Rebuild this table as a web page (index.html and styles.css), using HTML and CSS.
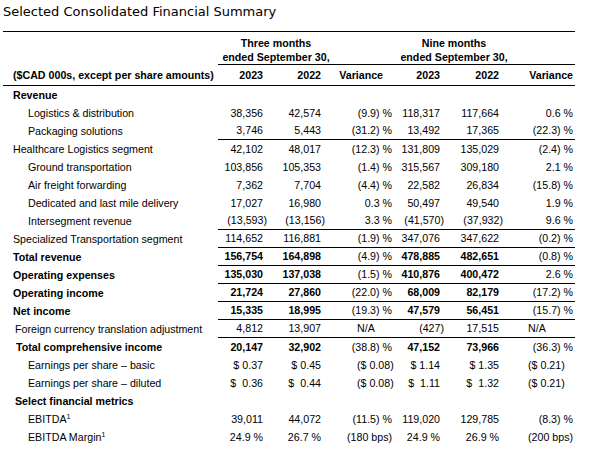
FILE: index.html
```html
<!DOCTYPE html>
<html lang="en">
<head>
<meta charset="utf-8">
<title>Selected Consolidated Financial Summary</title>
<link rel="stylesheet" href="styles.css">
</head>
<body>
<div class="page">
  <h1 class="title">Selected Consolidated Financial Summary</h1>
  <table class="fin">
    <colgroup>
      <col class="c-lbl"><col class="c-a"><col class="c-b"><col class="c-c"><col class="c-d"><col class="c-e"><col class="c-f">
    </colgroup>
    <thead>
      <tr class="h1">
        <td></td>
        <td colspan="3" class="grp">Three months</td>
        <td colspan="3" class="grp grp-9">Nine months</td>
      </tr>
      <tr class="h2">
        <td></td>
        <td colspan="3" class="grp ruled">ended September 30,</td>
        <td colspan="3" class="grp grp-9 ruled">ended September 30,</td>
      </tr>
      <tr class="h3">
        <td class="lbl l0">($CAD 000s, except per share amounts)</td>
        <td class="num">2023</td>
        <td class="num">2022</td>
        <td class="num vh3">Variance</td>
        <td class="num">2023</td>
        <td class="num">2022</td>
        <td class="num vh9">Variance</td>
      </tr>
    </thead>
    <tbody>
      <tr class="bold"><td class="lbl l0">Revenue</td><td></td><td></td><td></td><td></td><td></td><td></td></tr>
      <tr><td class="lbl l2">Logistics &amp; distribution</td><td class="num">38,356</td><td class="num">42,574</td><td class="num var">(9.9) %</td><td class="num">118,317</td><td class="num">117,664</td><td class="num var">0.6 %</td></tr>
      <tr class="rule"><td class="lbl l2">Packaging solutions</td><td class="num">3,746</td><td class="num">5,443</td><td class="num var">(31.2) %</td><td class="num">13,492</td><td class="num">17,365</td><td class="num var">(22.3) %</td></tr>
      <tr><td class="lbl l0">Healthcare Logistics segment</td><td class="num">42,102</td><td class="num">48,017</td><td class="num var">(12.3) %</td><td class="num">131,809</td><td class="num">135,029</td><td class="num var">(2.4) %</td></tr>
      <tr><td class="lbl l2">Ground transportation</td><td class="num">103,856</td><td class="num">105,353</td><td class="num var">(1.4) %</td><td class="num">315,567</td><td class="num">309,180</td><td class="num var">2.1 %</td></tr>
      <tr><td class="lbl l2">Air freight forwarding</td><td class="num">7,362</td><td class="num">7,704</td><td class="num var">(4.4) %</td><td class="num">22,582</td><td class="num">26,834</td><td class="num var">(15.8) %</td></tr>
      <tr><td class="lbl l2">Dedicated and last mile delivery</td><td class="num">17,027</td><td class="num">16,980</td><td class="num var">0.3 %</td><td class="num">50,497</td><td class="num">49,540</td><td class="num var">1.9 %</td></tr>
      <tr class="rule"><td class="lbl l2">Intersegment revenue</td><td class="num"><span class="ng">(13,593)</span></td><td class="num"><span class="ng">(13,156)</span></td><td class="num var">3.3 %</td><td class="num"><span class="ng">(41,570)</span></td><td class="num"><span class="ng">(37,932)</span></td><td class="num var">9.6 %</td></tr>
      <tr class="rule"><td class="lbl l0">Specialized Transportation segment</td><td class="num">114,652</td><td class="num">116,881</td><td class="num var">(1.9) %</td><td class="num">347,076</td><td class="num">347,622</td><td class="num var">(0.2) %</td></tr>
      <tr class="rule bold"><td class="lbl l0">Total revenue</td><td class="num">156,754</td><td class="num">164,898</td><td class="num var">(4.9) %</td><td class="num">478,885</td><td class="num">482,651</td><td class="num var">(0.8) %</td></tr>
      <tr class="rule bold"><td class="lbl l0">Operating expenses</td><td class="num">135,030</td><td class="num">137,038</td><td class="num var">(1.5) %</td><td class="num">410,876</td><td class="num">400,472</td><td class="num var">2.6 %</td></tr>
      <tr class="rule bold"><td class="lbl l0">Operating income</td><td class="num">21,724</td><td class="num">27,860</td><td class="num var">(22.0) %</td><td class="num">68,009</td><td class="num">82,179</td><td class="num var">(17.2) %</td></tr>
      <tr class="rule bold"><td class="lbl l0">Net income</td><td class="num">15,335</td><td class="num">18,995</td><td class="num var">(19.3) %</td><td class="num">47,579</td><td class="num">56,451</td><td class="num var">(15.7) %</td></tr>
      <tr class="rule"><td class="lbl l1">Foreign currency translation adjustment</td><td class="num">4,812</td><td class="num">13,907</td><td class="var left3">N/A</td><td class="num"><span class="ng">(427)</span></td><td class="num">17,515</td><td class="var left9">N/A</td></tr>
      <tr class="bold"><td class="lbl l1b">Total comprehensive income</td><td class="num">20,147</td><td class="num">32,902</td><td class="num var">(38.8) %</td><td class="num">47,152</td><td class="num">73,966</td><td class="num var">(36.3) %</td></tr>
      <tr><td class="lbl l2">Earnings per share – basic</td><td class="num">$ 0.37</td><td class="num">$ 0.45</td><td class="var left3">($ 0.08)</td><td class="num">$ 1.14</td><td class="num">$ 1.35</td><td class="var left9">($ 0.21)</td></tr>
      <tr><td class="lbl l2">Earnings per share – diluted</td><td class="num"><span class="cur">$</span>0.36</td><td class="num"><span class="cur">$</span>0.44</td><td class="var left3">($ 0.08)</td><td class="num"><span class="cur">$</span>1.11</td><td class="num"><span class="cur">$</span>1.32</td><td class="var left9">($ 0.21)</td></tr>
      <tr class="bold"><td class="lbl l1">Select financial metrics</td><td></td><td></td><td></td><td></td><td></td><td></td></tr>
      <tr><td class="lbl l2">EBITDA<sup class="fn">1</sup></td><td class="num">39,011</td><td class="num">44,072</td><td class="num var">(11.5) %</td><td class="num">119,020</td><td class="num">129,785</td><td class="num var">(8.3) %</td></tr>
      <tr><td class="lbl l2">EBITDA Margin<sup class="fn">1</sup></td><td class="num">24.9 %</td><td class="num">26.7 %</td><td class="num var">(180 bps)</td><td class="num">24.9 %</td><td class="num">26.9 %</td><td class="num var">(200 bps)</td></tr>
    </tbody>
  </table>
</div>
</body>
</html>
```

FILE: styles.css
```css
html, body {
  margin: 0;
  padding: 0;
  background: #ffffff;
  color: #000000;
}

.page {
  padding: 4px 0 0 3px;
  width: 572px;
}

.title {
  margin: 0 0 11px 0;
  font-family: "DejaVu Sans", Verdana, sans-serif;
  font-size: 13px;
  line-height: 16px;
  font-weight: normal;
  color: #000;
}

.fin {
  font-family: "Liberation Sans", Arial, sans-serif;
  font-size: 10.667px;
  line-height: 13px;
  color: #000;
  border-collapse: separate;
  border-spacing: 0;
  table-layout: fixed;
  width: 572px;
  border-top: 1px solid #000;
}

.c-lbl { width: 215px; }
.c-a { width: 45px; }
.c-b { width: 58px; }
.c-c { width: 71px; }
.c-d { width: 48px; }
.c-e { width: 59px; }
.c-f { width: 76px; }

.fin td {
  padding: 0;
  white-space: nowrap;
  vertical-align: middle;
}

.fin tbody tr { height: 18px; }

.fin thead td { font-weight: bold; }

.h1 { height: 18px; }
.h1 td { vertical-align: bottom; }
.h2 { height: 15px; }
.h3 { height: 21px; }
.h3 td { border-bottom: 1px solid #000; }

.grp {
  text-align: center;
  padding-right: 58px !important;
}
.grp-9 { padding-right: 59px !important; }
.ruled { border-bottom: 1px solid #000; }

.lbl { text-align: left; }
.l0 { padding-left: 10px !important; }
.l1 { padding-left: 12px !important; }
.l1b { padding-left: 13px !important; }
.l2 { padding-left: 25px !important; }

.num { text-align: right; }
.c-f, .fin td:last-child.num { padding-right: 2px; }
.vh3 { padding-right: 9px !important; }
.fin thead td.vh9 { padding-right: 5px; }

.left3 { text-align: left; padding-left: 36px !important; }
.left9 { text-align: left; padding-left: 29px !important; }

.rule td:not(.lbl) { border-bottom: 1px solid #000; }

.bold .lbl,
.bold .num:not(.var) { font-weight: bold; }

.ng { margin-right: -4px; }
.cur { margin-right: 6px; }

.fn {
  font-size: 7px;
  line-height: 0;
  vertical-align: 4px;
}
```
